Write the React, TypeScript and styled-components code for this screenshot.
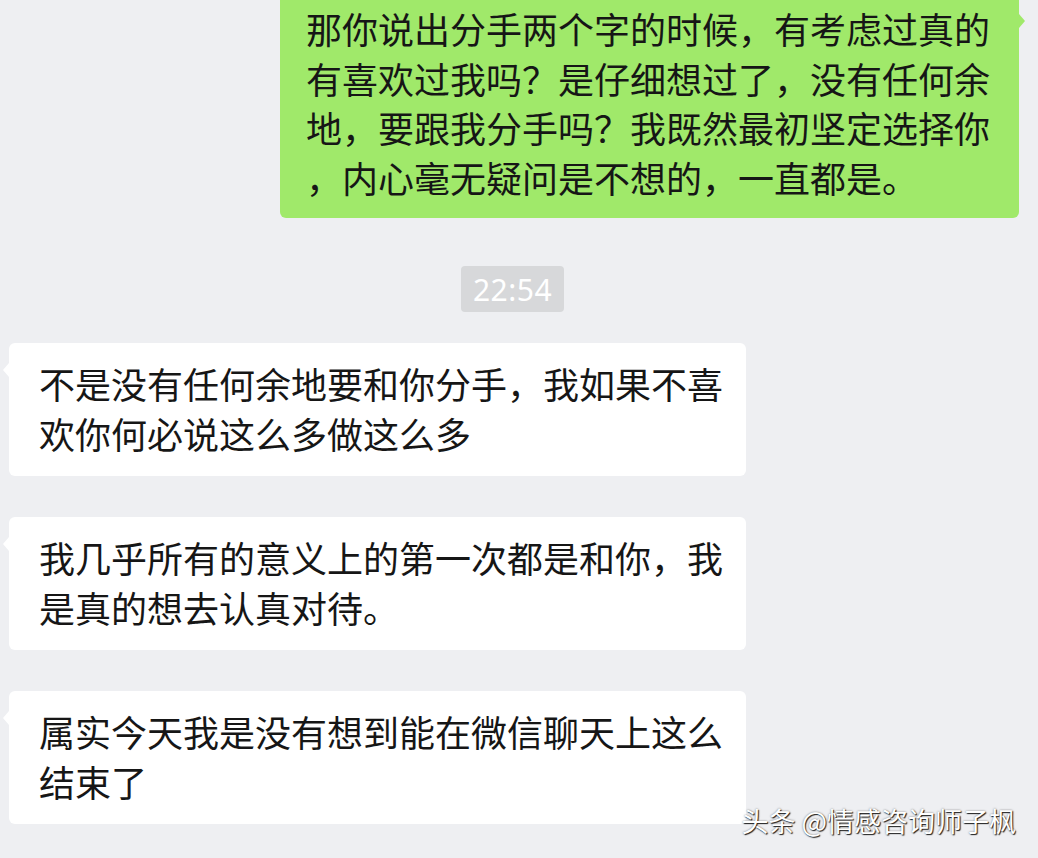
import React from "react"
import styled, { createGlobalStyle, css } from "styled-components"

const GlobalStyle = createGlobalStyle`
  html, body {
    margin: 0;
    padding: 0;
    background: #eeeff2;
  }
  body {
    font-family: "Noto Sans CJK SC", "Noto Sans", sans-serif;
  }
`

const Chat = styled.div`
  position: relative;
  display: flex;
  flex-direction: column;
  width: 1038px;
  height: 858px;
  overflow: hidden;
  background: #eeeff2;
`

const Row = styled.div<{ $mine?: boolean }>`
  display: flex;
  justify-content: ${p => (p.$mine ? "flex-end" : "flex-start")};
  padding: ${p => (p.$mine ? "0 19px 0 0" : "0 0 0 9px")};
  margin-bottom: ${p => (p.$mine ? "0" : "41px")};
`

const Bubble = styled.div<{ $mine?: boolean }>`
  position: relative;
  box-sizing: border-box;
  color: #161616;
  font-size: 36px;
  line-height: 50px;
  border-radius: 6px;

  &::after {
    content: "";
    position: absolute;
    width: 0;
    height: 0;
    border-top: 7px solid transparent;
    border-bottom: 7px solid transparent;
  }

  ${p =>
    p.$mine
      ? css`
          width: 739px;
          height: 218px;
          background: #a0e96a;
          padding: 4px 18px 0 26px;
          line-height: 49.5px;
          line-break: anywhere;
          border-top-left-radius: 0;
          border-top-right-radius: 0;
          &::after {
            right: -6px;
            top: 14px;
            border-left: 6px solid #a0e96a;
          }
        `
      : css`
          width: 737px;
          background: #ffffff;
          padding: 15px 20px 18px 30px;
          &::after {
            left: -6px;
            top: 20px;
            border-right: 6px solid #ffffff;
          }
        `}
`

const TimeRow = styled.div`
  display: flex;
  justify-content: center;
  padding-right: 13px;
  margin: 48px 0 31px;
`

const Time = styled.div`
  box-sizing: border-box;
  height: 46px;
  padding: 0 12px;
  display: flex;
  align-items: center;
  background: #d7d8da;
  border-radius: 4px;
  color: #ffffff;
  font-family: "Noto Sans", sans-serif;
  font-size: 30px;
  letter-spacing: 0.5px;
`

const Watermark = styled.div`
  position: absolute;
  right: 22px;
  top: 803px;
  color: #ffffff;
  font-size: 27px;
  line-height: 36px;
  text-shadow: 1px 1px 1px rgba(0, 0, 0, 0.85), 0 0 2px rgba(0, 0, 0, 0.5);
  white-space: nowrap;
`

const messages = [
  "不是没有任何余地要和你分手，我如果不喜欢你何必说这么多做这么多",
  "我几乎所有的意义上的第一次都是和你，我是真的想去认真对待。",
  "属实今天我是没有想到能在微信聊天上这么结束了",
]

const App = () => (
  <>
    <GlobalStyle />
    <Chat>
      <Row $mine>
        <Bubble $mine>
          那你说出分手两个字的时候，有考虑过真的有喜欢过我吗？是仔细想过了，没有任何余地，要跟我分手吗？我既然最初坚定选择你，内心毫无疑问是不想的，一直都是。
        </Bubble>
      </Row>
      <TimeRow>
        <Time>22:54</Time>
      </TimeRow>
      {messages.map(text => (
        <Row key={text}>
          <Bubble>{text}</Bubble>
        </Row>
      ))}
      <Watermark>头条 @情感咨询师子枫</Watermark>
    </Chat>
  </>
)

export default App
